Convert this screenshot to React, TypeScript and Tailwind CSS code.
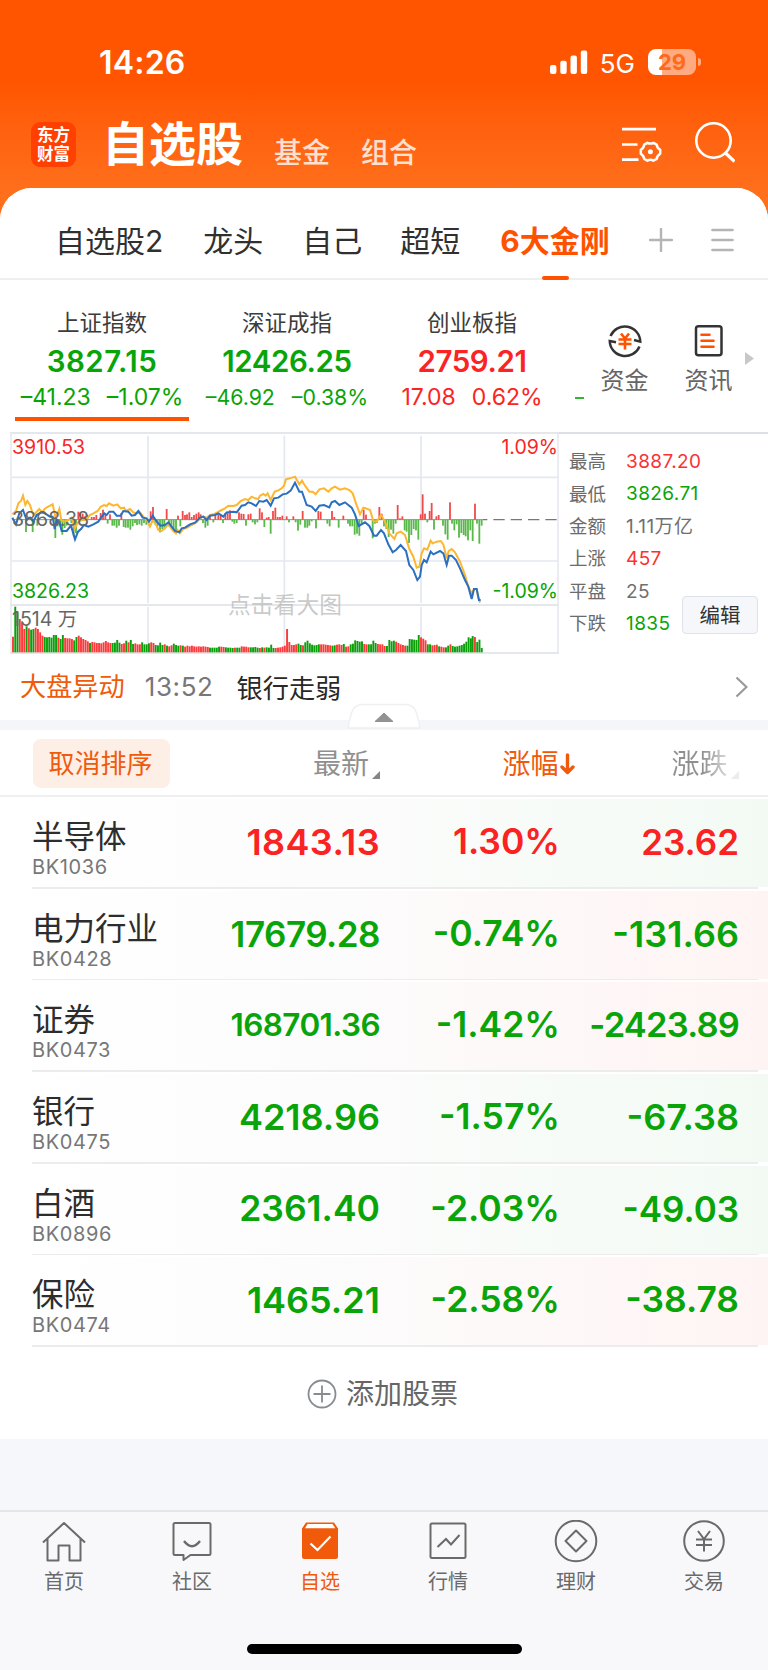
import type { ReactNode } from "react";

type Series = [number, number][];

// Chart space: 3 units per pixel, sharing one origin for price and volume panes
const AVG_LINE =
  "37,268 48,258 55,235 63,228 69,212 76,240 82,228 90,240 97,262 104,268 112,258 118,252 126,262 134,252 142,246 158,238 166,275 172,268 178,252 184,285 192,290 205,285 215,278 224,310 235,290 245,285 258,285 270,270 280,265 293,258 302,245 312,240 320,243 327,235 340,242 352,238 362,250 372,248 378,258 390,252 400,262 410,265 420,262 430,275 440,285 450,305 457,288 465,292 475,315 485,318 495,310 505,298 512,308 520,318 528,325 533,315 540,325 550,312 562,308 575,300 590,292 600,280 610,275 620,278 630,270 640,268 652,262 665,255 675,250 685,242 700,243 710,240 722,228 735,222 745,225 755,215 765,220 775,222 780,212 790,207 797,212 803,205 812,225 824,200 835,196 845,190 852,182 858,163 870,160 885,155 898,178 906,167 915,182 928,200 938,200 947,208 958,193 972,190 985,200 995,190 1005,185 1020,194 1035,190 1048,195 1058,205 1068,235 1080,268 1090,248 1098,250 1110,255 1120,288 1130,290 1143,270 1155,290 1168,325 1183,342 1190,325 1202,320 1215,330 1228,372 1240,395 1250,428 1258,425 1265,385 1272,370 1282,374 1292,347 1298,355 1310,350 1322,348 1330,358 1340,400 1346,378 1355,372 1365,382 1380,410 1395,450 1405,485 1415,505 1422,492 1430,492 1435,520 1440,533";

const PRICE_LINE =
  "37,278 48,298 58,265 69,255 80,285 90,278 100,290 110,270 125,262 135,265 150,275 158,275 164,312 170,285 178,290 185,318 200,318 213,302 225,343 234,320 243,312 252,300 265,305 280,298 295,290 305,275 313,265 320,270 328,260 340,260 350,272 362,272 370,258 385,260 395,272 405,270 415,258 428,278 440,280 447,290 458,272 470,290 482,302 495,300 505,292 515,305 525,318 538,322 545,310 555,308 570,298 585,293 600,278 610,275 620,285 630,272 645,270 655,265 670,275 680,262 700,260 710,262 725,242 735,240 745,232 755,235 768,243 778,228 790,230 800,225 812,242 822,220 835,218 848,208 860,206 872,197 885,173 898,200 906,200 920,240 935,245 947,258 958,242 972,240 988,247 995,232 1005,228 1018,240 1035,232 1045,240 1055,248 1065,268 1076,303 1095,292 1108,303 1122,332 1130,332 1143,315 1152,325 1165,358 1178,382 1188,375 1202,360 1218,378 1228,420 1240,435 1252,465 1260,455 1265,420 1272,405 1280,412 1292,380 1300,388 1320,378 1330,385 1340,420 1347,392 1355,392 1368,405 1380,430 1395,465 1405,485 1415,522 1422,492 1430,492 1437,525 1442,525";

const momentum: Series = [
  [78, -37], [98, -37], [112, -18], [166, -55], [173, -20], [180, -20], [187, -45], [194, -25], [200, -18], [214, -10],
  [221, -50], [228, -40], [235, 24], [241, 20], [248, 18], [255, 10], [262, 15], [275, 8], [282, 8], [289, 14], [302, 20],
  [309, 30], [316, 16], [323, -12], [330, 16], [337, -18], [343, -18], [350, -24], [357, -18], [364, 20], [371, -22],
  [377, -24], [384, -24], [391, -30], [398, -20], [405, -10], [411, -16], [418, -14], [425, -18], [432, -10], [439, -15],
  [452, 25], [459, 38], [466, -15], [473, -20], [480, -38], [487, -28], [493, -24], [500, 32], [507, -20], [514, -24],
  [521, -34], [528, -36], [534, 12], [541, -20], [548, 26], [555, 14], [561, 16], [568, 22], [575, 8], [582, 14], [589, 18],
  [596, 22], [602, 16], [609, -10], [616, -24], [623, -18], [630, 12], [640, -8], [646, 16], [655, 15], [662, 15], [669, -10],
  [676, 20], [683, 22], [690, 28], [697, -6], [703, -12], [710, -10], [717, 22], [724, 18], [731, 17], [738, -18], [745, 16],
  [752, 18], [758, -8], [765, -14], [772, -8], [779, 34], [786, 22], [793, -22], [800, 6], [806, 8], [812, -42], [819, 26],
  [826, 36], [833, 8], [840, 8], [847, 12], [860, 10], [867, -8], [880, 10], [887, -8], [894, -33], [901, -15], [908, 26],
  [915, -24], [922, -24], [928, -18], [935, -5], [948, -26], [955, 26], [962, 24], [982, -12], [989, -20], [996, 26],
  [1003, 8], [1016, -24], [1030, 12], [1044, -12], [1050, -20], [1057, -20], [1064, -45], [1071, -42], [1078, -48],
  [1085, -16], [1091, 30], [1098, 15], [1118, -56], [1125, -12], [1131, -10], [1138, 38], [1145, 18], [1152, -20],
  [1159, -28], [1166, -52], [1173, -30], [1180, -42], [1187, -12], [1193, 44], [1200, 4], [1207, 10], [1214, -32],
  [1220, -36], [1227, -70], [1234, -46], [1241, -28], [1248, -32], [1255, -60], [1262, 16], [1268, 76], [1275, 18],
  [1282, -8], [1289, 26], [1295, 50], [1302, -30], [1309, 10], [1316, 14], [1329, -18], [1336, -44], [1343, -60],
  [1350, 52], [1356, -12], [1363, -32], [1370, -14], [1377, -54], [1384, -40], [1391, -46], [1397, -50], [1404, -62],
  [1411, -32], [1418, -64], [1425, 48], [1431, -12], [1438, -72], [1445, -18],
];

// Positive values close up (red), negative close down (green)
const volumeRuns: [number, number[]][] = [
  [39, [47, -137, -120, 100, 93, 70, -78, 72, -68, -70, 74, 70, 60, 50, -46, -45, -46, -44, -52, -52, 44, -40, -52, 43, 42, 42, 40, -36, -46, 50, 45, 40, 37, 33]],
  [270, [-28, 31, 30, 28, 28, 27, 30, 34, 30, 28, -28, -29, -37, -29, 25, 27, -35, 30, -37, -25, 27, 24, 24, -30, -24, -24, -27, 30, 28]],
  [467, [-22, -21, -29, -22, 24, -20, 18, 21, -26, -22, -20, 21, -20, 17, 20, 18, 20, 18, 17, 18, 17, 18, 17, 16]],
  [630, [-14, -14, -14, -14, -17, 17, 16, -15, -14, -14, -13, 14, -14, -14, 18, 17, 17, 15, -15, -15, -16, -14, 13, -15, 14, -15, -14, -23, -13, 13, 14, 15, 17, 20, 70, 31]],
  [875, [22, 22, 24, -26, -22, 21, -30, -35, -27, -23, -21, -22, -24, 24, 24, 23, 22, 21, -20, -21, 23, 24, 22, -25, 17, 18]],
  [1052, [-24, -26, -36, -34, -32, -33, 25, 24, -24, -24, -35, -28, 25, 24, 24, 19, -19]],
  [1168, [-37, -33, -35, 32, 28, 24, 22, 20, -20]],
  [1229, [-40, -39, -38, -37, -52, 45, 41, 36, -24, -24, 21, 22, 23, -18, 17, 15, -15, -20, 24, -19, -17, -18, -20, -22, -26, -32, -45, -42]],
  [1418, [-49, 46, -31, -38, -13]],
];

const volumes: Series = volumeRuns.flatMap(([start, run]) =>
  run.map((v, i): [number, number] => [start + i * 6.8, v])
);

const tabs = [
  { name: "自选股2", gap: "ml-[55px]" },
  { name: "龙头", gap: "ml-[40px]" },
  { name: "自己", gap: "ml-[39px]" },
  { name: "超短", gap: "ml-[38px]" },
];

const indices = [
  { name: "上证指数", value: "3827.15", change: "–41.23", pct: "–1.07%", color: "text-[#08a408]", track: "tracking-[0.5px]", size: "text-[23px] gap-[16px]", active: true },
  { name: "深证成指", value: "12426.25", change: "–46.92", pct: "–0.38%", color: "text-[#08a408]", track: "tracking-[-0.4px]", size: "text-[21.3px] gap-[17px]", active: false },
  { name: "创业板指", value: "2759.21", change: "17.08", pct: "0.62%", color: "text-[#fa2424]", track: "tracking-[-0.4px]", size: "text-[23px] gap-[16px]", active: false },
];

const stats = [
  { label: "最高", value: "3887.20", color: "text-[#fa3232]" },
  { label: "最低", value: "3826.71", color: "text-[#08a408]" },
  { label: "金额", value: "1.11万亿", color: "text-[#707070]" },
  { label: "上涨", value: "457", color: "text-[#fa3232]" },
  { label: "平盘", value: "25", color: "text-[#707070]" },
  { label: "下跌", value: "1835", color: "text-[#08a408]" },
];

const GREEN_TINT = "to-[#f3faf4]";
const RED_TINT = "to-[#fff4f4]";

const stocks = [
  { name: "半导体", code: "BK1036", price: "1843.13", priceSize: "text-[36px] tracking-[0.4px]", pct: "1.30%", diff: "23.62", diffSize: "text-[35px]", up: true, tint: GREEN_TINT },
  { name: "电力行业", code: "BK0428", price: "17679.28", priceSize: "text-[35px] tracking-[-0.5px]", pct: "-0.74%", diff: "-131.66", diffSize: "text-[36px]", up: false, tint: RED_TINT },
  { name: "证券", code: "BK0473", price: "168701.36", priceSize: "text-[31.5px] tracking-[-0.6px]", pct: "-1.42%", diff: "-2423.89", diffSize: "text-[34.5px] tracking-[-0.8px]", up: false, tint: RED_TINT },
  { name: "银行", code: "BK0475", price: "4218.96", priceSize: "text-[36px]", pct: "-1.57%", diff: "-67.38", diffSize: "text-[36px]", up: false, tint: GREEN_TINT },
  { name: "白酒", code: "BK0896", price: "2361.40", priceSize: "text-[35.5px]", pct: "-2.03%", diff: "-49.03", diffSize: "text-[35px]", up: false, tint: GREEN_TINT },
  { name: "保险", code: "BK0474", price: "1465.21", priceSize: "text-[36px]", pct: "-2.58%", diff: "-38.78", diffSize: "text-[35.4px]", up: false, tint: RED_TINT },
];

function Header() {
  return (
    <header className="h-[230px] bg-linear-to-b from-[#ff5500] from-35% to-[#ff701c] to-85% text-white">
      <div className="flex h-[124px] items-center pl-[99px] pr-[67px]">
        <span className="mt-[2px] text-[32px] leading-none font-semibold tracking-[0.2px]">14:26</span>
        <svg className="ml-auto" width="38" height="24" viewBox="0 0 38 24" fill="currentColor">
          <rect x="0" y="15" width="6.4" height="9" rx="2" />
          <rect x="10.3" y="10.8" width="6.4" height="13.2" rx="2" />
          <rect x="20.5" y="5.5" width="6.4" height="18.5" rx="2" />
          <rect x="30.8" y="0.5" width="6.4" height="23.5" rx="2" />
        </svg>
        <span className="ml-[12px] mt-[3px] text-[26px] leading-none">5G</span>
        <div className="ml-[13px] flex items-center gap-[2px]">
          <div className="flex h-[26px] w-[48px] items-center justify-center rounded-[8px] bg-linear-to-r from-white from-29% to-[#ffaa80] to-29% text-[22px] leading-none font-bold text-[#ff6a1a]">
            29
          </div>
          <div className="h-[8px] w-[3px] rounded-r-full bg-[#ffaa80]" />
        </div>
      </div>
      <div className="flex h-[44px] items-end pl-[31px] pr-[33px]">
        <div className="mb-[1px] flex h-[45px] w-[45px] shrink-0 flex-col items-center justify-center rounded-[9px] bg-[#ff4000] font-['Liberation_Serif','Noto_Sans_CJK_SC',serif] text-[16.5px] leading-[19px] font-bold">
          <span>东方</span>
          <span>财富</span>
        </div>
        <span className="ml-[26px] text-[47px] leading-[48px] font-bold">自选股</span>
        <span className="-mb-[1px] ml-[31px] text-[28px] leading-[32px] font-medium text-white/80">基金</span>
        <span className="-mb-[1px] ml-[31px] text-[28px] leading-[32px] font-medium text-white/80">组合</span>
        <svg className="mb-[5px] ml-auto" width="42" height="38" viewBox="0 0 42 38" fill="none" stroke="white" strokeWidth="2.7">
          <path d="M1 4.2h34M1 19.5h15.500M1 34.7h16.500" />
          <path d="M26.4 17.8q3 1.6 6 0l3.3 1.8q.2 3.2 3.5 5.3v3.8q-3.3 2-3.5 5.2l-3.3 1.8q-3-1.7-6 0l-3.2-1.8q-.3-3.2-3.4-5.2v-3.8q3.1-2 3.4-5.3z" strokeWidth="2.5" strokeLinejoin="round" />
          <circle cx="29.4" cy="26.8" r="2.5" fill="white" stroke="none" />
        </svg>
        <svg className="mb-[5px] ml-[30px]" width="42" height="42" viewBox="0 0 42 42" fill="none" stroke="white" strokeWidth="2.6">
          <circle cx="20.5" cy="19.5" r="17.2" />
          <path d="M32.5 32l9 8.5" strokeWidth="3.2" />
        </svg>
      </div>
    </header>
  );
}

function TabBar() {
  return (
    <div className="flex h-[92px] items-center rounded-t-[32px] border-b-2 border-[#efefef] bg-white text-[30px] text-[#303030]">
      {tabs.map((tab) => (
        <span key={tab.name} className={tab.gap + " mt-[16px] leading-[36px] whitespace-nowrap"}>
          {tab.name}
        </span>
      ))}
      <div className="relative ml-[40px] mt-[16px] leading-[36px] font-bold whitespace-nowrap text-[#ff5200]">
        6大金刚
        <div className="absolute -bottom-[21px] left-[42px] h-[4px] w-[27px] rounded-full bg-[#ff5200]" />
      </div>
      <svg className="mt-[14px] ml-auto" width="24" height="24" viewBox="0 0 24 24" stroke="#b4b4b4" strokeWidth="2.4" strokeLinecap="round">
        <path d="M1 12h22M12 1v22" />
      </svg>
      <svg className="mt-[14px] mr-[34px] ml-[38px]" width="23" height="24" viewBox="0 0 23 24" stroke="#b4b4b4" strokeWidth="2.6" strokeLinecap="round">
        <path d="M1.5 2h20M1.5 12h20M1.5 22h20" />
      </svg>
    </div>
  );
}

function IndexStrip() {
  return (
    <div className="flex h-[152px] pl-[9.5px]">
      {indices.map((item) => (
        <div key={item.name} className="flex w-[185px] shrink-0 flex-col items-center">
          <span className="mt-[28px] text-[22.5px] leading-[30px] text-[#3c3c3c]">{item.name}</span>
          <span className={item.color + " mt-[5px] text-[29.5px] leading-[36px] font-semibold " + item.track}>{item.value}</span>
          <div className={item.color + " mt-[3px] flex leading-[30px] whitespace-nowrap " + item.size}>
            <span>{item.change}</span>
            <span>{item.pct}</span>
          </div>
          {item.active && <div className="mt-[5px] h-[4px] w-[174px] bg-[#ff5200]" />}
        </div>
      ))}
      <div className="mt-[117px] ml-[10px] h-[2px] w-[9px] bg-[#35b535]" />
      <div className="ml-[17px] flex w-[48px] flex-col items-center text-[24px] leading-[30px] text-[#666]">
        <svg className="mt-[43px]" width="36" height="36" viewBox="0 0 36 36" fill="none" stroke="#333" strokeWidth="2.4">
          <path d="M3.5 13A15.5 15.5 0 0 1 33.3 18.6L27 17M32.5 23.5A15.5 15.5 0 0 1 2.7 18L9 19.2" />
          <path d="M14 10.5l4 5 4-5M11.5 16.5h13M11.5 21h13M18 15.5v11" stroke="#ff5200" strokeWidth="2.6" />
        </svg>
        <span className="mt-[7px]">资金</span>
      </div>
      <div className="ml-[36px] flex w-[48px] flex-col items-center text-[24px] leading-[30px] text-[#666]">
        <svg className="mt-[43px]" width="36" height="36" viewBox="0 0 36 36" fill="none" stroke="#333" strokeWidth="2.5">
          <rect x="5" y="3.3" width="25.5" height="29" rx="2.5" />
          <path d="M10.5 11.8h8M10.5 17.8h12M10.5 23.8h12" stroke="#ff5200" strokeWidth="2.6" strokeLinecap="round" />
        </svg>
        <span className="mt-[7px]">资讯</span>
      </div>
      <svg className="mt-[72px] ml-[12px]" width="9" height="13" viewBox="0 0 9 13" fill="#c8c8c8">
        <path d="M0 0l9 6.5-9 6.5z" />
      </svg>
    </div>
  );
}

function MomentumBars() {
  return (
    <>
      {momentum.map(([x, v], i) => (
        <rect key={i} x={x - 2.7} y={v > 0 ? 284 - v : 284} width="5.4" height={Math.abs(v)} fill={v > 0 ? "#f04a4a" : "#58b848"} />
      ))}
    </>
  );
}

function VolumeBars() {
  return (
    <>
      {volumes.map(([x, v], i) => (
        <rect key={i} x={x - 2.9} y={682 - Math.abs(v)} width="5.8" height={Math.abs(v)} fill={v > 0 ? "#fb3b3b" : "#0aa00a"} />
      ))}
    </>
  );
}

function MinuteChart() {
  return (
    <div className="relative w-[549px] shrink-0 text-[19.5px] leading-[20px]">
      <svg width="549" height="222" viewBox="30 21 1647 666" fill="none">
        <path d="M30 24h1647M33 540h1641M30 684h1647" stroke="#dcdfe6" strokeWidth="4.5" />
        <path d="M33 24v660M1674 24v660" stroke="#e2e5ec" strokeWidth="4" />
        <path d="M36 157h1638M36 408h1638M444 32v502M853 32v502M1263 32v502M444 546v136M853 546v136M1263 546v136" stroke="#e4e8f0" strokeWidth="5" />
        <path d="M36 284h1412" stroke="#777" strokeWidth="2.5" />
        <path d="M1448 284h222" stroke="#777" strokeWidth="4" strokeDasharray="34 18" strokeDashoffset="20" />
        <MomentumBars />
        <polyline points={AVG_LINE} stroke="#fdb62f" strokeWidth="6" />
        <polyline points={PRICE_LINE} stroke="#2a6fc0" strokeWidth="6" />
        <VolumeBars />
      </svg>
      <span className="absolute top-[5px] left-[2px] text-[#fa2424]">3910.53</span>
      <span className="absolute top-[77px] left-[2px] text-[#666]">3868.38</span>
      <span className="absolute top-[149px] left-[2px] text-[#08a408]">3826.23</span>
      <span className="absolute top-[177px] left-[2px] text-[#666]">1514 万</span>
      <span className="absolute top-[5px] right-[1px] text-[#fa2424]">1.09%</span>
      <span className="absolute top-[149px] right-[1px] text-[#08a408]">-1.09%</span>
      <span className="absolute top-[163px] left-[218px] text-[22.8px] whitespace-nowrap text-[#b9b9b9]/75">点击看大图</span>
    </div>
  );
}

function ChartPanel() {
  return (
    <div className="relative flex h-[222px] pl-[10px]">
      <MinuteChart />
      <div className="flex flex-1 flex-col border-t-2 border-[#dcdfe6] pt-[12px] pl-[10px] text-[18.5px]">
        {stats.map((item) => (
          <div key={item.label} className="flex h-[32.4px] items-center">
            <span className="w-[57px] text-[#6b6b6b]">{item.label}</span>
            <span className={item.color + " text-[19px] tracking-[0.4px]"}>{item.value}</span>
          </div>
        ))}
      </div>
      <div className="absolute top-[164px] right-[10px] flex h-[38px] w-[76px] items-center justify-center rounded-[4px] border-[1.5px] border-[#dfe2e9] bg-[#f6f7fa] pt-[2px] text-[20.5px] text-[#333]">
        编辑
      </div>
    </div>
  );
}

function NewsLine() {
  return (
    <div className="flex h-[66px] items-center pl-[20px] text-[26.2px] leading-[36px]">
      <span className="text-[#f05a0a]">大盘异动</span>
      <span className="ml-[20px] text-[26px] tracking-[0.6px] text-[#777]">13:52</span>
      <span className="mt-[3px] ml-[23px] text-[#282828]">银行走弱</span>
      <svg className="mr-[20px] ml-auto" width="13" height="22" viewBox="0 0 13 22" fill="none" stroke="#999" strokeWidth="2.2">
        <path d="M1.5 1.5l10 9.5-10 9.5" />
      </svg>
    </div>
  );
}

function CollapseBand() {
  return (
    <div className="relative h-[10px] bg-[#f5f6fa]">
      <svg className="absolute -top-[17px] left-[347px]" width="74" height="27" viewBox="0 0 74 27">
        <path d="M1 25C4 8 6 1.500 16 1.500H58C68 1.500 70 8 73 25Z" fill="white" stroke="#f0f0f3" strokeWidth="1.500" />
        <path d="M28 18.500l9-8.500 9 8.500z" fill="#929292" stroke="#929292" strokeLinejoin="round" />
      </svg>
    </div>
  );
}

function ColumnHeads() {
  return (
    <div className="flex h-[67px] items-center border-b-2 border-[#efefef] pt-[2px] text-[28px] leading-[36px] text-[#8f8f8f]">
      <div className="ml-[33px] flex h-[49px] w-[137px] items-center justify-center rounded-[8px] bg-[#fdeee6] pt-[1px] pr-[2px] text-[26px] text-[#f05a0a]">
        取消排序
      </div>
      <div className="flex w-[210px] items-end justify-end">
        最新
        <svg className="mb-[3px] ml-[3px]" width="8" height="8" viewBox="0 0 8 8" fill="#85858a">
          <path d="M8 0v8H0z" />
        </svg>
      </div>
      <div className="flex w-[194.5px] items-center justify-end text-[#f05a0a]">
        涨幅
        <svg className="ml-[1px]" width="15" height="22" viewBox="0 0 15 22" fill="none" stroke="currentColor" strokeWidth="3.4" strokeLinecap="round" strokeLinejoin="round">
          <path d="M7.500 2v17M2 14l5.500 5.500 5.500-5.500" />
        </svg>
      </div>
      <div className="flex w-[164px] items-end justify-end">
        <span className="bg-linear-to-r from-[#8f8f8f] from-55% to-[#dcdcdc] bg-clip-text text-transparent">涨跌</span>
        <svg className="mb-[3px] ml-[3px]" width="8" height="8" viewBox="0 0 8 8" fill="#ececec">
          <path d="M8 0v8H0z" />
        </svg>
      </div>
    </div>
  );
}

function StockRow({ stock }: { stock: (typeof stocks)[number] }) {
  const color = stock.up ? "text-[#fa2222]" : "text-[#08a408]";
  return (
    <div className="h-[91.65px] pt-[2px]">
      <div className={"flex h-[88px] items-center bg-linear-to-r from-white via-[#fcfcfc] via-40% " + stock.tint}>
        <div className="ml-[32px] flex w-[130px] shrink-0 flex-col">
          <span className="mt-[11px] text-[31.5px] leading-[38px] whitespace-nowrap text-[#2d2d2d]">{stock.name}</span>
          <span className="-mt-[1px] text-[20px] leading-[24px] tracking-[0.6px] text-[#777]">{stock.code}</span>
        </div>
        <div className={color + " flex flex-1 items-center pb-[2px] leading-[44px] font-semibold"}>
          <span className={stock.priceSize + " w-[218px] text-right"}>{stock.price}</span>
          <span className="w-[180px] text-right text-[35.5px]">{stock.pct}</span>
          <span className={stock.diffSize + " w-[179px] text-right"}>{stock.diff}</span>
        </div>
      </div>
      <div className="mr-[10px] ml-[32px] h-[1.65px] bg-[#ececec]" />
    </div>
  );
}

function NavItem({ label, active, children }: { label: string; active?: boolean; children: ReactNode }) {
  return (
    <div className={"flex flex-1 flex-col items-center text-[20px] leading-[26px] " + (active ? "text-[#f05a0a]" : "text-[#6a6a6a]")}>
      <svg className="mt-[8px]" width="44" height="44" viewBox="0 0 44 44" fill="none" stroke="currentColor" strokeWidth="2">
        {children}
      </svg>
      <span className="mt-[5px]">{label}</span>
    </div>
  );
}

function BottomNav() {
  return (
    <nav className="h-[162px] border-t-2 border-[#e6e6e8] bg-[#f8f8fb]">
      <div className="flex">
        <NavItem label="首页">
          <path d="M1 22.500L22 3l21 19.500M5.500 19v21.500h11V25.500h11v15h11V19" strokeLinejoin="round" />
        </NavItem>
        <NavItem label="社区">
          <path d="M5 3h34q1.500 0 1.500 1.500v29q0 1.500-1.500 1.500H20.500l-7 5V35H5q-1.500 0-1.500-1.500v-29Q3.500 3 5 3z" strokeLinejoin="round" />
          <path d="M14 21q8 10.500 16 0" strokeWidth="2.400" />
        </NavItem>
        <NavItem label="自选" active>
          <path d="M8 2.500h28l4 6v28q0 2.500-2.500 2.500h-31Q4 39 4 36.500v-28z" fill="currentColor" stroke="none" />
          <path d="M9.500 4h25l2.800 4.200H7z" fill="#fff" stroke="none" />
          <path d="M12.500 23.500l7 6.500 13-13.500" stroke="white" strokeWidth="2.200" />
        </NavItem>
        <NavItem label="行情">
          <rect x="4.500" y="3.500" width="35" height="34.500" rx="1.500" />
          <path d="M11.500 27l8.500-8 5 5.500L33.500 15" />
        </NavItem>
        <NavItem label="理财">
          <circle cx="22" cy="21" r="20.300" />
          <path d="M22 10.500L32.500 21 22 31.500 11.500 21z" strokeLinejoin="round" />
        </NavItem>
        <NavItem label="交易">
          <circle cx="22" cy="21" r="19.800" />
          <path d="M16 11l6 8 6-8M14 19.500h16M14 25h16M22 18.500v13" />
        </NavItem>
      </div>
      <div className="mx-auto mt-[49px] h-[10px] w-[275px] rounded-full bg-black" />
    </nav>
  );
}

export default function App() {
  return (
    <div className="h-[1670px] w-[768px] overflow-hidden bg-[#f6f7fa] font-['Inter','Noto_Sans_CJK_SC',sans-serif]">
      <Header />
      <main className="relative -mt-[42px] rounded-t-[32px] bg-white">
        <TabBar />
        <IndexStrip />
        <ChartPanel />
        <NewsLine />
        <CollapseBand />
        <ColumnHeads />
        {stocks.map((stock) => (
          <StockRow key={stock.code} stock={stock} />
        ))}
        <div className="flex h-[92px] items-center justify-center gap-[9px] pr-[3px] pt-[2px] text-[28px] leading-[36px] text-[#666]">
          <svg width="30" height="30" viewBox="0 0 30 30" fill="none" stroke="#888b92" strokeWidth="1.800">
            <circle cx="15" cy="15" r="13.500" />
            <path d="M6.500 15h17M15 6.500v17" />
          </svg>
          添加股票
        </div>
      </main>
      <div className="h-[71px]" />
      <BottomNav />
    </div>
  );
}
